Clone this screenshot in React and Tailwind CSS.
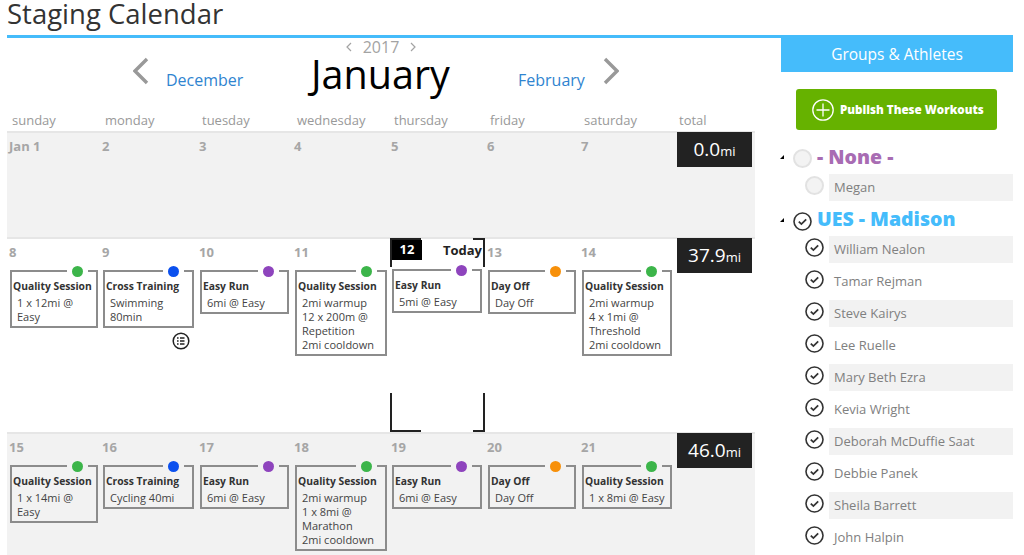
const font = { fontFamily: '"Open Sans", sans-serif' };

// pr keeps each card at its own width, the columns are not quite even
const colPad = ['pr-[5px]', 'pr-[6px]', 'pr-[6px]', 'pr-[5px]', 'pr-[6px]', 'pr-[6px]', 'pr-[5px]'];
const gridCols = 'grid grid-cols-[93px_97px_95px_97px_96px_94px_95px_75px]';

const quality = { name: 'Quality Session', dot: 'bg-[#3cb54a]' };
const cross = { name: 'Cross Training', dot: 'bg-[#0b50ee]' };
const easy = { name: 'Easy Run', dot: 'bg-[#8e44bd]' };
const off = { name: 'Day Off', dot: 'bg-[#f7900a]' };

const weeks = [
  {
    total: '0.0',
    height: 'h-[106px]',
    bg: 'bg-[#f2f2f2]',
    gap: 'bg-[#f2f2f2]',
    days: [{ n: 'Jan 1' }, { n: '2' }, { n: '3' }, { n: '4' }, { n: '5' }, { n: '6' }, { n: '7' }],
  },
  {
    total: '37.9',
    height: 'h-[195px]',
    bg: 'bg-white',
    gap: 'bg-white',
    days: [
      { n: '8', w: quality, lines: ['1 x 12mi @', 'Easy'] },
      { n: '9', w: cross, lines: ['Swimming', '80min'], notes: true },
      { n: '10', w: easy, lines: ['6mi @ Easy'] },
      { n: '11', w: quality, lines: ['2mi warmup', '12 x 200m @', 'Repetition', '2mi cooldown'] },
      { n: '12', today: true, w: easy, lines: ['5mi @ Easy'] },
      { n: '13', w: off, lines: ['Day Off'] },
      { n: '14', w: quality, lines: ['2mi warmup', '4 x 1mi @', 'Threshold', '2mi cooldown'] },
    ],
  },
  {
    total: '46.0',
    height: 'h-[123px]',
    bg: 'bg-[#f2f2f2]',
    gap: 'bg-[#f2f2f2]',
    days: [
      { n: '15', w: quality, lines: ['1 x 14mi @', 'Easy'] },
      { n: '16', w: cross, lines: ['Cycling 40mi'] },
      { n: '17', w: easy, lines: ['6mi @ Easy'] },
      { n: '18', w: quality, lines: ['2mi warmup', '1 x 8mi @', 'Marathon', '2mi cooldown'] },
      { n: '19', w: easy, lines: ['6mi @ Easy'] },
      { n: '20', w: off, lines: ['Day Off'] },
      { n: '21', w: quality, lines: ['1 x 8mi @ Easy'] },
    ],
  },
];

const athletes = [
  ['William Nealon', true],
  ['Tamar Rejman', false],
  ['Steve Kairys', true],
  ['Lee Ruelle', false],
  ['Mary Beth Ezra', true],
  ['Kevia Wright', false],
  ['Deborah McDuffie Saat', true],
  ['Debbie Panek', false],
  ['Sheila Barrett', true],
  ['John Halpin', false],
];

function Chevron({ flip }) {
  return (
    <svg width="16" height="28" viewBox="0 0 16 28" className="mt-[2px] shrink-0">
      <path
        d={flip ? 'M2 2l12 12L2 26' : 'M14 2L2 14l12 12'}
        fill="none"
        stroke="#999"
        strokeWidth="3.4"
      />
    </svg>
  );
}

function YearArrow({ flip }) {
  return (
    <svg width="6" height="10" viewBox="0 0 6 10" className="shrink-0">
      <path d={flip ? 'M1 1l4 4-4 4' : 'M5 1L1 5l4 4'} fill="none" stroke="#a3a3a3" strokeWidth="1.2" />
    </svg>
  );
}

function Check({ on, size = 19 }) {
  if (!on) {
    return (
      <span
        style={{ width: size, height: size }}
        className="block shrink-0 rounded-full border-2 border-[#e2e2e2] bg-[#f3f3f3]"
      />
    );
  }
  return (
    <svg width={size} height={size} viewBox="0 0 19 19" className="block shrink-0">
      <circle cx="9.5" cy="9.5" r="8.5" fill="#fff" stroke="#333" strokeWidth="1.6" />
      <path d="M5.8 9.6l2.6 2.5 4.8-4.7" fill="none" stroke="#333" strokeWidth="1.8" />
    </svg>
  );
}

function Card({ w, lines, gap }) {
  return (
    <div className="relative border-2 border-[#8c8c8c] pl-[1px] pt-[7px] pb-[2px]">
      <span className={`absolute -top-[2px] right-[8px] h-[2px] w-[21px] ${gap}`} />
      <span className={`absolute -top-[6px] right-[13px] h-[11px] w-[11px] rounded-full ${w.dot}`} />
      <div className="text-[10.3px] leading-[15px] font-bold text-[#333] whitespace-nowrap">{w.name}</div>
      <div className="pl-[4px] pt-[2px] text-[11px] leading-[14px] text-[#444]">
        {lines.map((l) => (
          <div key={l} className="whitespace-nowrap">{l}</div>
        ))}
      </div>
    </div>
  );
}

function TodayFrame() {
  return (
    <>
      <span className="absolute -top-[1px] -left-[2px] h-[29px] w-[31px] border-t-2 border-l-2 border-[#222]" />
      <span className="absolute -top-[1px] left-[81px] h-[29px] w-[12px] border-t-2 border-r-2 border-[#222]" />
      <span className="absolute bottom-0 -left-[2px] h-[39px] w-[31px] border-b-2 border-l-2 border-[#222]" />
      <span className="absolute bottom-0 left-[81px] h-[39px] w-[12px] border-b-2 border-r-2 border-[#222]" />
    </>
  );
}

function Day({ day, col, week }) {
  return (
    <div className={`relative ${colPad[col]}`}>
      {day.today ? (
        <>
          <TodayFrame />
          <div className="flex h-[30px] items-start justify-between pt-[1px]">
            <span className="flex h-[20px] w-[30px] items-center justify-center bg-black text-[13px] font-bold text-white">
              12
            </span>
            <span className="text-[13px] leading-[20px] font-bold text-[#222]">Today</span>
          </div>
        </>
      ) : (
        <div className="h-[31px] -ml-[1px] pt-[4px] text-[13px] leading-[18px] font-bold text-[#a6a6a6]">{day.n}</div>
      )}
      {day.w && <Card w={day.w} lines={day.lines} gap={week.gap} />}
      {day.notes && (
        <div className="mt-[4px] flex justify-end pr-[4px]">
          <svg width="18" height="18" viewBox="0 0 18 18">
            <circle cx="9" cy="9" r="7.8" fill="none" stroke="#222" strokeWidth="1.5" />
            <path d="M8 6h4.5M8 9h4.5M8 12h4.5" stroke="#222" strokeWidth="1.5" />
            <path d="M5 6h1.6M5 9h1.6M5 12h1.6" stroke="#222" strokeWidth="1.5" />
          </svg>
        </div>
      )}
    </div>
  );
}

function Week({ week }) {
  return (
    <div className={`border-t-2 border-[#e6e6e6] pl-[3px] ${week.height} ${week.bg} ${gridCols}`}>
      {week.days.map((d, i) => (
        <Day key={d.n} day={d} col={i} week={week} />
      ))}
      <div className="-mt-[1px] flex h-[35px] items-center justify-center bg-[#222] text-white">
        <span className="text-[19px] leading-none">{week.total}</span>
        <span className="mt-[4px] text-[13px] leading-none">mi</span>
      </div>
    </div>
  );
}

function Tri() {
  return <span className="mr-[9px] -mt-[4px] h-0 w-0 shrink-0 border-b-[4px] border-l-[4px] border-b-black border-l-transparent" />;
}

export default function App() {
  return (
    <div style={font} className="h-[555px] w-[1024px] overflow-hidden bg-white">
      <h1 className="h-[35px] pl-[7px] text-[27.5px] leading-[27px] text-[#333]">Staging Calendar</h1>

      <div className="ml-[7px] flex w-[1006px] border-t-[3px] border-[#45bcfb]">
        <div className="w-[748px] shrink-0">
          <div className="flex h-[17px] items-center justify-center gap-[11px] pt-[1px] text-[16px] leading-[16px] text-[#a3a3a3]">
            <YearArrow />
            <span>2017</span>
            <YearArrow flip />
          </div>
          <div className="flex h-[50px] items-start pl-[126px]">
            <Chevron />
            <span className="ml-[17px] mt-[13px] w-[78px] text-[16px] leading-[24px] text-[#2f84d0]">December</span>
            <span className="ml-[67px] mt-[1px] w-[141px] text-[39.5px] leading-[36px] whitespace-nowrap text-black">January</span>
            <span className="ml-[66px] mt-[13px] w-[67px] text-[16px] leading-[24px] text-[#2f84d0]">February</span>
            <span className="ml-[18px]">
              <Chevron flip />
            </span>
          </div>
          <div className={`pl-[3px] pt-[6px] h-[26px] text-[13px] leading-[18px] text-[#999] ${gridCols}`}>
            {['sunday', 'monday', 'tuesday', 'wednesday', 'thursday', 'friday', 'saturday', 'total'].map((d) => (
              <span key={d} className="pl-[2px]">{d}</span>
            ))}
          </div>
          {weeks.map((w) => (
            <Week key={w.total} week={w} />
          ))}
        </div>

        <aside className="ml-[26px] w-[232px] shrink-0">
          <div className="flex h-[34px] items-center justify-center bg-[#45bcfb] text-[15.5px] text-white">
            Groups &amp; Athletes
          </div>
          <div className="px-[15px] pt-[17px]">
            <button className="flex h-[41px] w-[201px] items-center gap-[6px] rounded-[3px] bg-[#66b200] pl-[16px] text-[11.6px] font-extrabold text-white">
              <svg width="22" height="22" viewBox="0 0 22 22">
                <circle cx="11" cy="11" r="10.2" fill="none" stroke="#fff" strokeWidth="1.3" />
                <path d="M11 4.5v13M4.5 11h13" stroke="#fff" strokeWidth="1.3" />
              </svg>
              Publish These Workouts
            </button>
          </div>

          <div className="-ml-[1px] mt-[19px] flex h-[19px] items-center">
            <Tri />
            <Check on={false} />
            <span className="ml-[5px] -mt-[3px] text-[19.5px] font-extrabold text-[#a86cb3]">- None -</span>
          </div>
          <div className="ml-[24px] mt-[6px] flex">
            <span className="mt-[2px]">
              <Check on={false} />
            </span>
            <div className="ml-[5px] h-[27px] w-[184px] bg-[#f2f2f2] pl-[5px] text-[13px] leading-[27px] text-[#808080]">Megan</div>
          </div>

          <div className="-ml-[1px] mt-[11px] flex h-[19px] items-center">
            <Tri />
            <Check on />
            <span className="ml-[5px] -mt-[5px] text-[19.5px] font-extrabold text-[#45bcfb]">UES - Madison</span>
          </div>
          <div className="mt-[5px] flex flex-col gap-[5px]">
            {athletes.map(([name, bar]) => (
              <div key={name} className="ml-[24px] flex">
                <span className="mt-[2px]">
                  <Check on />
                </span>
                <div className={`ml-[5px] h-[27px] w-[184px] pl-[5px] text-[13px] leading-[27px] text-[#808080] ${bar ? 'bg-[#f2f2f2]' : ''}`}>
                  {name}
                </div>
              </div>
            ))}
          </div>
        </aside>
      </div>
    </div>
  );
}
